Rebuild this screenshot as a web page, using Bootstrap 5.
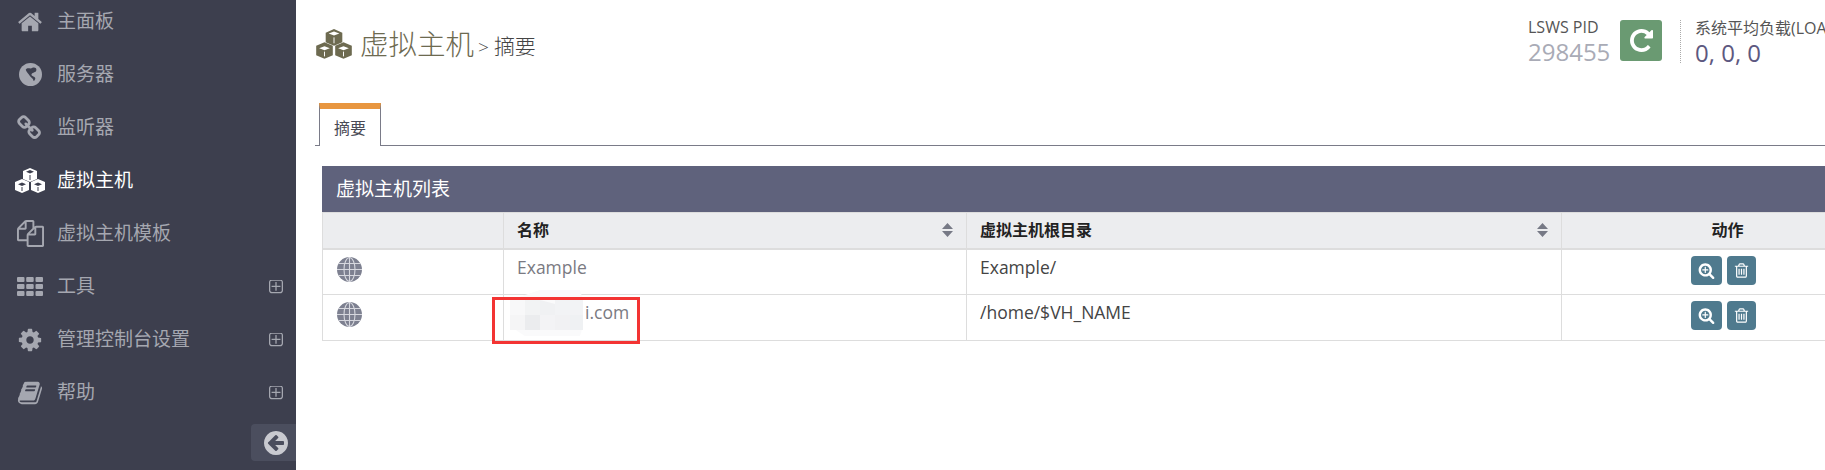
<!DOCTYPE html>
<html lang="zh">
<head>
<meta charset="utf-8">
<title>虚拟主机</title>
<link href="https://cdn.jsdelivr.net/npm/bootstrap@5.3.0/dist/css/bootstrap.min.css" rel="stylesheet">
<style>
html,body{height:470px;overflow:hidden}
body{font-family:"Open Sans","Noto Sans CJK SC",sans-serif;background:#fff;color:#333}
.shell{width:1825px;height:470px;overflow:hidden}
.side{width:296px;flex:none;background:#3d3f4e;position:relative;overflow:hidden}
.side-list{margin:-5px 0 0;padding:0;list-style:none}
.side-item{height:53px;display:flex;align-items:center;color:#a5a7b0;font-size:19px;padding-right:13px}
.side-item.on{color:#fff}
.side-ic{width:57px;flex:none;display:flex;justify-content:center;padding-left:3px}
.side-ic svg{display:block;fill:currentColor}
.side-txt{flex:1}
.exp{width:14px;height:14px;fill:#a5a7b0;display:block}
.collapse-tab{position:absolute;right:0;top:424px;width:45px;height:37px;background:#4b4e5e;border-radius:4px 0 0 4px;display:flex;align-items:center;justify-content:center;padding-left:4px}
.main-pane{flex:1;min-width:0;overflow:hidden}
.main-in{width:1610px;padding:0 0 0 19px}
.head-row{height:103px;padding-top:20px}
.ttl{width:1213px;flex:none;height:48px;color:#6d6a50;font-size:28.500px;font-weight:300;line-height:1;display:flex;align-items:center}
.ttl small{font-size:21px;color:#444;font-weight:300;margin-left:4px;padding-top:4px}
.ttl .gt{font-size:19px;margin-right:5px}
.ttl svg{margin-right:7px}
.stat-lab{font-size:16px;line-height:22px;color:#555}
.stat-val{font-size:24px;line-height:28px;color:#a9abb6}
.stat-val.load{color:#5d5880}
.stat-a{margin-top:-4px;width:92px;flex:none}
.btn-reload{width:42px;height:41px;padding:0;background:#6a9a72;border:0;border-radius:3px;display:flex;align-items:center;justify-content:center}
.stat-b{margin-left:18px;padding-left:14px;border-left:1px dotted #aaa;white-space:nowrap;height:43px}
.stat-b .stat-lab{margin-top:-3px}
.tabs-row{border-bottom:1px solid #7a7b88;height:43px;display:flex;padding-left:4px}
.tab-on{width:62px;height:43px;background:#fff;border:1px solid #7a7b88;border-top:6px solid #e8963f;border-bottom:0;color:#4a4a55;font-size:16px;display:flex;align-items:center;justify-content:center}
.grid-wrap{margin:20px 0 0 7px;width:1571px;position:relative}
.grid-head{background:#5f627c;color:#fff;font-size:19px;height:46px;display:flex;align-items:center;padding-left:14px}
.vh-table{table-layout:fixed;width:1571px;margin:0;--bs-table-border-color:#ddd}
.vh-table th{background:#ecedef;height:36px;padding:0 13px;font-size:16px;color:#222;font-weight:700;vertical-align:middle;border-width:1px 1px 2px}
.vh-table td{height:46px;padding:4px 13px 0;font-size:17.500px;color:#444;vertical-align:top;border-width:1px}
.vh-table td.vh-name{color:#7a7a82}
.dom-txt{margin-left:68px}
.th-flex{display:flex;justify-content:space-between;align-items:center}
.globe{display:block;margin:3px 0 0 1px}
.act{display:flex;justify-content:center;gap:5px;padding-top:2px;padding-right:8px}
.btn-act{height:29px;padding:0;background:#4f7a8e;border:0;border-radius:4px;display:flex;align-items:center;justify-content:center}
.w31{width:31px}.w29{width:29px}
.redact{position:absolute;left:188px;top:124px}
.redact svg{display:block}
.mark-box{position:absolute;left:170px;top:131px;width:148px;height:47px;border:3px solid #f33433}
</style>
</head>
<body>
<div class="shell d-flex">
  <aside class="side">
    <ul class="side-list">
      <li class="side-item"><span class="side-ic"><svg width="26" height="26" viewBox="0 0 1792 1792"><path d="M1472 992v480q0 26-19 45t-45 19h-384v-384h-256v384h-384q-26 0-45-19t-19-45v-480q0-1 .5-3t.5-3l575-474 575 474q1 2 1 6zm223-69l-62 74q-8 9-21 11h-3q-13 0-21-7l-692-577-692 577q-12 8-24 7-13-2-21-11l-62-74q-8-10-7-23.5t11-21.5l719-599q32-26 76-26t76 26l244 204v-195q0-14 9-23t23-9h192q14 0 23 9t9 23v408l219 182q10 8 11 21.5t-7 23.5z"/></svg></span><span class="side-txt">主面板</span></li>
      <li class="side-item"><span class="side-ic"><svg width="23" height="23" viewBox="0 0 24 24"><circle cx="12" cy="12" r="12"/><path fill="#3d3f4e" d="M7 7C9 4 12 7 14 5c2-1 5 0 4 3-1 2-5 2-5 4s4 2 4 4-2 4-2 2-3-3-4-5-3-3-4-6z"/></svg></span><span class="side-txt">服务器</span></li>
      <li class="side-item"><span class="side-ic"><svg width="26" height="26" viewBox="0 0 1792 1792"><path d="M1456 1216q0-40-28-68l-208-208q-28-28-68-28-42 0-72 32 3 3 19 18.500t21.500 21.500 15 19 13 25.500 3.500 27.500q0 40-28 68t-68 28q-15 0-27.500-3.500t-25.500-13-19-15-21.500-21.500-18.500-19q-33 31-33 73 0 40 28 68l206 207q27 27 68 27 40 0 68-26l147-146q28-28 28-67zm-703-705q0-40-28-68l-206-207q-28-28-68-28-39 0-68 27l-147 146q-28 28-28 67 0 40 28 68l208 208q27 27 68 27 42 0 72-31-3-3-19-18.500t-21.500-21.500-15-19-13-25.500-3.500-27.500q0-40 28-68t68-28q15 0 27.500 3.500t25.500 13 19 15 21.500 21.500 18.500 19q33-31 33-73zm895 705q0 120-85 203l-147 146q-83 83-203 83-121 0-204-85l-206-207q-83-83-83-203 0-123 88-209l-88-88q-86 88-208 88-120 0-204-84l-208-208q-84-84-84-204t85-203l147-146q83-83 203-83 121 0 204 85l206 207q83 83 83 203 0 123-88 209l88 88q86-88 208-88 120 0 204 84l208 208q84 84 84 204z"/></svg></span><span class="side-txt">监听器</span></li>
      <li class="side-item on"><span class="side-ic"><svg width="32" height="26" viewBox="0 0 32 26"><g fill="#fff"><path d="M16 0l7 3v8l-7 3-7-3V3z"/><path d="M8 11l7 3v8l-7 3-7-3v-8z"/><path d="M24 11l7 3v8l-7 3-7-3v-8z"/></g><g fill="#3d3f4e"><path d="M16 2l4 1.700-4 1.700-4-1.700zM8 14.500l4 1.700-4 1.700-4-1.700zM24 14.500l4 1.700-4 1.700-4-1.700z"/></g><g fill="none" stroke="#3d3f4e" stroke-width="1"><path d="M16 7v5M8 19v4M24 19v4"/></g></svg></span><span class="side-txt">虚拟主机</span></li>
      <li class="side-item"><span class="side-ic"><svg width="27" height="27" viewBox="0 0 1792 1792"><path d="M1696 384q40 0 68 28t28 68v1216q0 40-28 68t-68 28h-960q-40 0-68-28t-28-68v-288h-544q-40 0-68-28t-28-68v-672q0-40 20-88t48-76l408-408q28-28 76-48t88-20h416q40 0 68 28t28 68v328q68-40 128-40h416zm-544 213l-299 299h299v-299zm-640-384l-299 299h299v-299zm196 647l316-316v-416h-384v416q0 40-28 68t-68 28h-416v640h512v-256q0-40 20-88t48-76zm956 804v-1152h-384v416q0 40-28 68t-68 28h-416v640h896z"/></svg></span><span class="side-txt">虚拟主机模板</span></li>
      <li class="side-item"><span class="side-ic"><svg width="26" height="19" viewBox="0 0 26 19"><rect width="7.500" height="5" rx="1"/><rect x="9.200" width="7.500" height="5" rx="1"/><rect x="18.500" width="7.500" height="5" rx="1"/><rect y="7" width="7.500" height="5" rx="1"/><rect x="9.200" y="7" width="7.500" height="5" rx="1"/><rect x="18.500" y="7" width="7.500" height="5" rx="1"/><rect y="14" width="7.500" height="5" rx="1"/><rect x="9.200" y="14" width="7.500" height="5" rx="1"/><rect x="18.500" y="14" width="7.500" height="5" rx="1"/></svg></span><span class="side-txt">工具</span><svg class="exp" viewBox="192 192 1408 1408"><path d="M1344 800v64q0 14-9 23t-23 9h-352v352q0 14-9 23t-23 9h-64q-14 0-23-9t-9-23v-352h-352q-14 0-23-9t-9-23v-64q0-14 9-23t23-9h352v-352q0-14 9-23t23-9h64q14 0 23 9t9 23v352h352q14 0 23 9t9 23zm128 448v-832q0-66-47-113t-113-47h-832q-66 0-113 47t-47 113v832q0 66 47 113t113 47h832q66 0 113-47t47-113zm128-832v832q0 119-84.500 203.500t-203.500 84.500h-832q-119 0-203.500-84.500t-84.500-203.500v-832q0-119 84.500-203.500t203.500-84.500h832q119 0 203.500 84.500t84.500 203.500z"/></svg></li>
      <li class="side-item"><span class="side-ic"><svg width="26" height="26" viewBox="0 0 1792 1792"><path d="M1152 896q0-106-75-181t-181-75-181 75-75 181 75 181 181 75 181-75 75-181zm512-109v222q0 12-8 23t-20 13l-185 28q-19 54-39 91 35 50 107 138 10 12 10 25t-9 23q-27 37-99 108t-94 71q-12 0-26-9l-138-108q-44 23-91 38-16 136-29 186-7 28-36 28h-222q-14 0-24.500-8.500t-11.500-21.500l-28-184q-49-16-90-37l-141 107q-10 9-25 9-14 0-25-11-126-114-165-168-7-10-7-23 0-12 8-23 15-21 51-66.500t54-70.500q-27-50-41-99l-183-27q-13-2-21-12.500t-8-23.500v-222q0-12 8-23t19-13l186-28q14-46 39-92-40-57-107-138-10-12-10-24 0-10 9-23 26-36 98.500-107.500t94.500-71.500q13 0 26 10l138 107q44-23 91-38 16-136 29-186 7-28 36-28h222q14 0 24.500 8.500t11.500 21.500l28 184q49 16 90 37l142-107q9-9 24-9 13 0 25 10 129 119 165 170 7 8 7 22 0 12-8 23-15 21-51 66.500t-54 70.500q26 50 41 98l183 28q13 2 21 12.500t8 23.500z"/></svg></span><span class="side-txt">管理控制台设置</span><svg class="exp" viewBox="192 192 1408 1408"><path d="M1344 800v64q0 14-9 23t-23 9h-352v352q0 14-9 23t-23 9h-64q-14 0-23-9t-9-23v-352h-352q-14 0-23-9t-9-23v-64q0-14 9-23t23-9h352v-352q0-14 9-23t23-9h64q14 0 23 9t9 23v352h352q14 0 23 9t9 23zm128 448v-832q0-66-47-113t-113-47h-832q-66 0-113 47t-47 113v832q0 66 47 113t113 47h832q66 0 113-47t47-113zm128-832v832q0 119-84.500 203.500t-203.500 84.500h-832q-119 0-203.500-84.500t-84.500-203.500v-832q0-119 84.500-203.500t203.500-84.500h832q119 0 203.500 84.500t84.500 203.500z"/></svg></li>
      <li class="side-item"><span class="side-ic"><svg width="26" height="26" viewBox="0 0 1792 1792"><path d="M1703 478q40 57 18 129l-275 906q-19 64-76.500 107.500t-122.500 43.500h-923q-77 0-148.500-53.500t-99.500-131.500q-24-67-2-127 0-4 3-27t4-37q1-8-3-21.500t-3-19.500q2-11 8-21t16.500-23.500 16.500-23.500q23-38 45-91.500t30-91.500q3-10 .5-30t-.5-28q3-11 17-28t17-23q21-36 42-92t25-90q1-9-2.500-32t.5-28q4-13 22-30.500t22-22.500q19-26 42.500-84.500t27.500-96.500q1-8-3-25.500t-2-26.500q2-8 9-18t18-23 17-21q8-12 16.500-30.500t15-35 16-36 19.500-32 26.500-23.500 36-11.500 47.500 5.500l-1 3q38-9 51-9h761q74 0 114 56t18 130l-274 906q-36 119-71.500 153.500t-128.500 34.500h-869q-27 0-38 15-11 16-1 43 24 70 144 70h923q29 0 56-15.500t35-41.500l300-987q7-22 5-57 38 15 59 43zm-1064 2q-4 13 2 22.500t20 9.500h608q13 0 25.500-9.500t16.500-22.500l21-64q4-13-2-22.500t-20-9.500h-608q-13 0-25.500 9.500t-16.500 22.500zm-83 256q-4 13 2 22.500t20 9.500h608q13 0 25.500-9.500t16.500-22.500l21-64q4-13-2-22.500t-20-9.500h-608q-13 0-25.500 9.500t-16.500 22.500z"/></svg></span><span class="side-txt">帮助</span><svg class="exp" viewBox="192 192 1408 1408"><path d="M1344 800v64q0 14-9 23t-23 9h-352v352q0 14-9 23t-23 9h-64q-14 0-23-9t-9-23v-352h-352q-14 0-23-9t-9-23v-64q0-14 9-23t23-9h352v-352q0-14 9-23t23-9h64q14 0 23 9t9 23v352h352q14 0 23 9t9 23zm128 448v-832q0-66-47-113t-113-47h-832q-66 0-113 47t-47 113v832q0 66 47 113t113 47h832q66 0 113-47t47-113zm128-832v832q0 119-84.500 203.500t-203.500 84.500h-832q-119 0-203.500-84.500t-84.500-203.500v-832q0-119 84.500-203.500t203.500-84.500h832q119 0 203.500 84.500t84.500 203.500z"/></svg></li>
    </ul>
    <div class="collapse-tab"><svg width="24" height="24" viewBox="128 128 1536 1536" fill="#c9cad0"><path d="M1408 960v-128q0-26-19-45t-45-19h-502l189-189q19-19 19-45t-19-45l-91-91q-18-18-45-18t-45 18l-362 362-91 91q-18 18-18 45t18 45l91 91 362 362q18 18 45 18t45-18l91-91q18-18 18-45t-18-45l-189-189h502q26 0 45-19t19-45zm256-64q0 209-103 385.500t-279.500 279.500-385.500 103-385.500-103-279.500-279.500-103-385.500 103-385.500 279.500-279.500 385.500-103 385.500 103 279.500 279.500 103 385.500z"/></svg></div>
  </aside>
  <main class="main-pane">
    <div class="main-in">
      <div class="head-row d-flex align-items-start">
        <div class="ttl"><svg width="38" height="31" viewBox="0 0 32 26"><g fill="#6d6a50"><path d="M16 0l7 3v8l-7 3-7-3V3z"/><path d="M8 11l7 3v8l-7 3-7-3v-8z"/><path d="M24 11l7 3v8l-7 3-7-3v-8z"/></g><g fill="#fff"><path d="M16 2l4.500 1.700-4.500 1.700-4.500-1.700zM8 14.500l4.500 1.700-4.500 1.700-4.500-1.700zM24 14.500l4.500 1.700-4.500 1.700-4.500-1.700z"/></g><g fill="none" stroke="#fff" stroke-width=".8"><path d="M16 7v5M8 19v4M24 19v4"/></g></svg>虚拟主机<small><span class="gt">&gt;</span>摘要</small></div>
        <div class="stat-a"><div class="stat-lab">LSWS PID</div><div class="stat-val">298455</div></div>
        <button type="button" class="btn btn-reload" aria-label="重启"><svg width="23" height="23" viewBox="128 128 1536 1536" fill="#fff"><path d="M1664 256v448q0 26-19 45t-45 19h-448q-42 0-59-40-17-39 14-69l138-138q-148-137-349-137-104 0-198.500 40.500t-163.500 109.500-109.500 163.500-40.500 198.500 40.500 198.500 109.500 163.500 163.500 109.500 198.500 40.500q119 0 225-52t179-147q7-10 23-12 15 0 25 9l137 138q9 8 9.500 20.500t-7.500 22.500q-109 132-264 204.500t-327 72.500q-156 0-298-61t-245-164-164-245-61-298 61-298 164-245 245-164 298-61q147 0 284.500 55.500t244.500 156.500l130-129q29-31 70-14 39 17 39 59z"/></svg></button>
        <div class="stat-b"><div class="stat-lab">系统平均负载(LOAD)</div><div class="stat-val load">0, 0, 0</div></div>
      </div>
      <div class="tabs-row"><div class="tab-on">摘要</div></div>
      <div class="grid-wrap">
        <div class="grid-head">虚拟主机列表</div>
        <table class="table table-bordered vh-table">
          <colgroup><col style="width:181px"><col style="width:463px"><col style="width:595px"><col style="width:332px"></colgroup>
          <thead><tr>
            <th></th>
            <th><div class="th-flex">名称<svg width="11" height="14" viewBox="0 0 11 14" fill="#777a86"><path d="M5.500 0L11 6H0zM0 8h11l-5.500 6z"/></svg></div></th>
            <th><div class="th-flex">虚拟主机根目录<svg width="11" height="14" viewBox="0 0 11 14" fill="#777a86"><path d="M5.500 0L11 6H0zM0 8h11l-5.500 6z"/></svg></div></th>
            <th class="text-center">动作</th>
          </tr></thead>
          <tbody>
            <tr>
              <td><svg class="globe" width="25" height="25" viewBox="0 0 25 25"><circle cx="12.500" cy="12.500" r="12.500" fill="#7d8090"/><g fill="none" stroke="#d6d7de" stroke-width="1.100"><ellipse cx="12.500" cy="12.500" rx="5.500" ry="12"/><path d="M12.500 0v25M0 12.500h25M2 6.500h21M2 18.500h21"/></g></svg></td>
              <td class="vh-name">Example</td>
              <td>Example/</td>
              <td><div class="act"><button type="button" class="btn btn-act w31" aria-label="查看"><svg width="17" height="17" viewBox="0 0 1792 1792" fill="#fff"><path d="M1088 800v64q0 13-9.500 22.500t-22.500 9.500h-224v224q0 13-9.500 22.500t-22.500 9.500h-64q-13 0-22.500-9.500t-9.500-22.500v-224h-224q-13 0-22.500-9.500t-9.500-22.500v-64q0-13 9.500-22.500t22.500-9.500h224v-224q0-13 9.500-22.500t22.500-9.500h64q13 0 22.500 9.500t9.500 22.500v224h224q13 0 22.500 9.500t9.500 22.500zm128 32q0-185-131.500-316.500t-316.500-131.500-316.500 131.500-131.500 316.500 131.500 316.500 316.500 131.500 316.500-131.500 131.500-316.500zm512 832q0 53-37.500 90.500t-90.500 37.500q-54 0-90-38l-343-342q-179 124-399 124-143 0-273.500-55.500t-225-150-150-225-55.500-273.500 55.500-273.500 150-225 225-150 273.500-55.500 273.500 55.500 225 150 150 225 55.500 273.500q0 220-124 399l343 343q37 37 37 90z"/></svg></button><button type="button" class="btn btn-act w29" aria-label="删除"><svg width="17" height="17" viewBox="0 0 1792 1792" fill="#fff"><path d="M704 736v576q0 14-9 23t-23 9h-64q-14 0-23-9t-9-23v-576q0-14 9-23t23-9h64q14 0 23 9t9 23zm256 0v576q0 14-9 23t-23 9h-64q-14 0-23-9t-9-23v-576q0-14 9-23t23-9h64q14 0 23 9t9 23zm256 0v576q0 14-9 23t-23 9h-64q-14 0-23-9t-9-23v-576q0-14 9-23t23-9h64q14 0 23 9t9 23zm128 724v-948h-896v948q0 22 7 40.500t14.500 27 10.500 8.500h832q3 0 10.500-8.500t14.500-27 7-40.500zm-672-1076h448l-48-117q-7-9-17-11h-317q-10 2-17 11zm928 32v64q0 14-9 23t-23 9h-96v948q0 83-47 143.500t-113 60.500h-832q-66 0-113-58.500t-47-141.500v-952h-96q-14 0-23-9t-9-23v-64q0-14 9-23t23-9h309l70-167q15-37 54-63t79-26h320q40 0 79 26t54 63l70 167h309q14 0 23 9t9 23z"/></svg></button></div></td>
            </tr>
            <tr>
              <td><svg class="globe" width="25" height="25" viewBox="0 0 25 25"><circle cx="12.500" cy="12.500" r="12.500" fill="#7d8090"/><g fill="none" stroke="#d6d7de" stroke-width="1.100"><ellipse cx="12.500" cy="12.500" rx="5.500" ry="12"/><path d="M12.500 0v25M0 12.500h25M2 6.500h21M2 18.500h21"/></g></svg></td>
              <td class="vh-name"><span class="dom-txt">i.com</span></td>
              <td>/home/$VH_NAME</td>
              <td><div class="act"><button type="button" class="btn btn-act w31" aria-label="查看"><svg width="17" height="17" viewBox="0 0 1792 1792" fill="#fff"><path d="M1088 800v64q0 13-9.500 22.500t-22.500 9.500h-224v224q0 13-9.500 22.500t-22.500 9.500h-64q-13 0-22.500-9.500t-9.500-22.500v-224h-224q-13 0-22.500-9.500t-9.500-22.500v-64q0-13 9.500-22.500t22.500-9.500h224v-224q0-13 9.500-22.500t22.500-9.500h64q13 0 22.500 9.500t9.500 22.500v224h224q13 0 22.500 9.500t9.500 22.500zm128 32q0-185-131.500-316.500t-316.500-131.500-316.500 131.500-131.500 316.500 131.500 316.500 316.500 131.500 316.500-131.500 131.500-316.500zm512 832q0 53-37.500 90.500t-90.500 37.500q-54 0-90-38l-343-342q-179 124-399 124-143 0-273.500-55.500t-225-150-150-225-55.500-273.500 55.500-273.500 150-225 225-150 273.500-55.500 273.500 55.500 225 150 150 225 55.500 273.500q0 220-124 399l343 343q37 37 37 90z"/></svg></button><button type="button" class="btn btn-act w29" aria-label="删除"><svg width="17" height="17" viewBox="0 0 1792 1792" fill="#fff"><path d="M704 736v576q0 14-9 23t-23 9h-64q-14 0-23-9t-9-23v-576q0-14 9-23t23-9h64q14 0 23 9t9 23zm256 0v576q0 14-9 23t-23 9h-64q-14 0-23-9t-9-23v-576q0-14 9-23t23-9h64q14 0 23 9t9 23zm256 0v576q0 14-9 23t-23 9h-64q-14 0-23-9t-9-23v-576q0-14 9-23t23-9h64q14 0 23 9t9 23zm128 724v-948h-896v948q0 22 7 40.500t14.500 27 10.500 8.500h832q3 0 10.500-8.500t14.500-27 7-40.500zm-672-1076h448l-48-117q-7-9-17-11h-317q-10 2-17 11zm928 32v64q0 14-9 23t-23 9h-96v948q0 83-47 143.500t-113 60.500h-832q-66 0-113-58.500t-47-141.500v-952h-96q-14 0-23-9t-9-23v-64q0-14 9-23t23-9h309l70-167q15-37 54-63t79-26h320q40 0 79 26t54 63l70 167h309q14 0 23 9t9 23z"/></svg></button></div></td>
            </tr>
          </tbody>
        </table>
        <div class="redact"><svg width="73" height="46" viewBox="0 0 73 46"><path fill="#fafafb" d="M0 10L30 0h40l3 10v26l-3 10H15L0 36z"/><rect y="10" width="15" height="15" fill="#f8f8f9"/><rect y="25" width="15" height="15" fill="#f5f5f6"/><rect x="15" y="10" width="15" height="15" fill="#f2f3f4"/><path fill="#f0f1f3" d="M30 10l30 8v7H30z"/><rect x="45" y="10" width="28" height="15" fill="#f2f3f5"/><rect x="15" y="25" width="15" height="15" fill="#ebecee"/><rect x="30" y="25" width="15" height="15" fill="#f3f3f5"/><rect x="45" y="25" width="15" height="15" fill="#f1f1f3"/><rect x="60" y="25" width="13" height="15" fill="#eff1f3"/></svg></div>
        <div class="mark-box"></div>
      </div>
    </div>
  </main>
</div>
<script src="https://cdn.jsdelivr.net/npm/bootstrap@5.3.0/dist/js/bootstrap.bundle.min.js"></script>
</body>
</html>
